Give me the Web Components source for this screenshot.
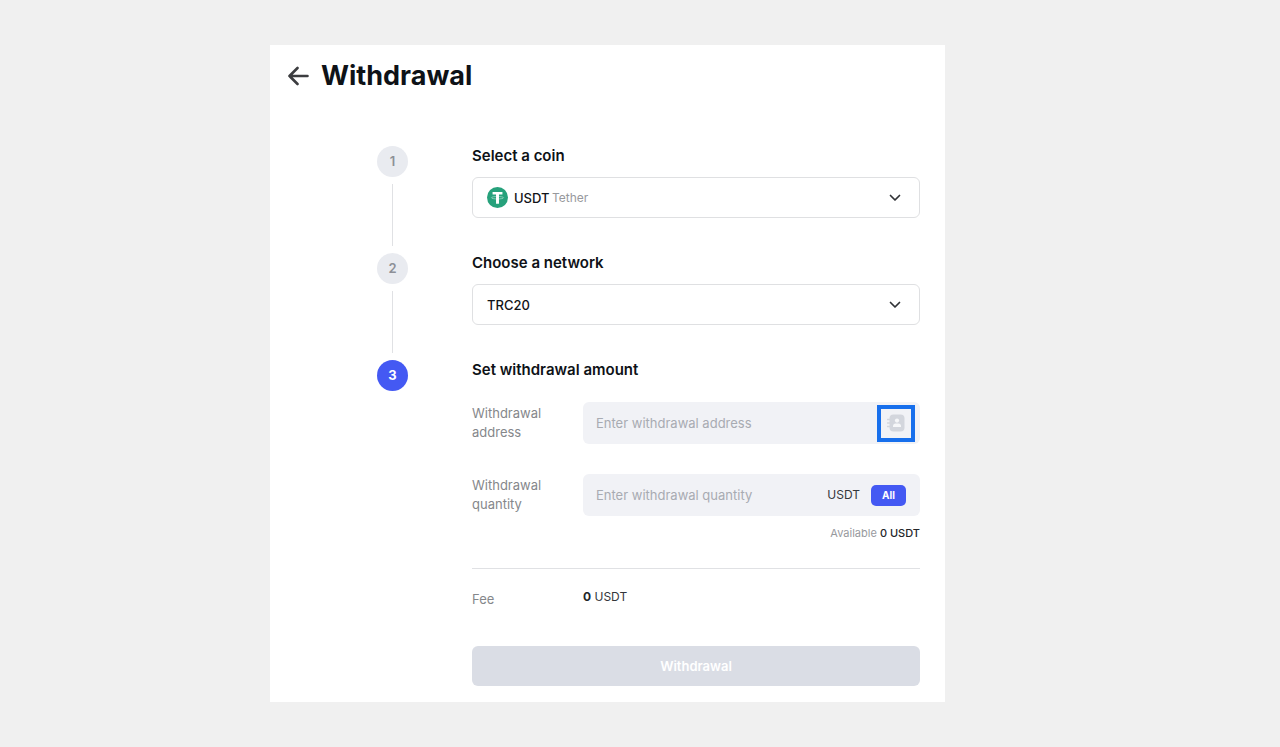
<!DOCTYPE html>
<html lang="en">
<head>
<meta charset="utf-8">
<meta name="viewport" content="width=device-width, initial-scale=1">
<title>Withdrawal</title>
<style>
  body { margin: 0; background: #f0f0f0; color: #0e1217; font: 13px/20px Inter, "Liberation Sans", sans-serif; }
</style>
</head>
<body>
<withdrawal-page>
  <withdrawal-step number="1">
    <span slot="title">Select a coin</span>
    <coin-select></coin-select>
  </withdrawal-step>
  <withdrawal-step number="2">
    <span slot="title">Choose a network</span>
    <network-select></network-select>
  </withdrawal-step>
  <withdrawal-step number="3" active>
    <span slot="title">Set withdrawal amount</span>
    <amount-form></amount-form>
  </withdrawal-step>
</withdrawal-page>

<script>
  const define = (name, html, setup) => {
    const template = document.createElement('template');
    template.innerHTML = html;
    customElements.define(name, class extends HTMLElement {
      constructor() {
        super();
        this.attachShadow({ mode: 'open' }).append(template.content.cloneNode(true));
      }
      connectedCallback() { if (setup) setup(this, this.shadowRoot); }
    });
  };

  const selectStyles = `
    :host { display: block; }
    .box { display: grid; align-items: center; }
    .box > * { grid-area: 1 / 1; }
    select { appearance: none; box-sizing: border-box; width: 100%; height: 41px; margin: 0; padding: 0 40px 0 14px;
      border: 1px solid #dfe0e2; border-radius: 6px; background: #fff; color: #121418; font: 500 13px/20px Inter, sans-serif; }
    .chevron { justify-self: end; margin-right: 18px; pointer-events: none; }
  `;
  const chevron = `<svg class="chevron" width="14" height="14" viewBox="0 0 14 14" fill="none" stroke="#303236" stroke-width="1.7" stroke-linecap="round" stroke-linejoin="round" aria-hidden="true"><path d="M2.500 4.500 7 9l4.500-4.500"/></svg>`;

  define('coin-select', `
    <style>${selectStyles}
      select { padding-left: 41px; }
      .mark { margin-left: 15px; pointer-events: none; }
      .name { margin-left: 80px; color: #97999d; font-size: 12px; pointer-events: none; }
    </style>
    <div class="box">
      <select aria-label="Coin"><option>USDT</option></select>
      <svg class="mark" width="21" height="21" viewBox="0 0 20 20" aria-hidden="true">
        <circle cx="10" cy="10" r="10" fill="#26a17b"/>
        <ellipse cx="10" cy="10.200" rx="5.800" ry="1.200" fill="none" stroke="#a5d8c7" stroke-width=".7"/>
        <path d="M5.300 4.700h9.400v2.500h-3.300v8.700H8.600V7.200H5.300z" fill="#fff"/>
      </svg>
      <span class="name">Tether</span>
      ${chevron}
    </div>`);

  define('network-select', `
    <style>${selectStyles}</style>
    <div class="box">
      <select aria-label="Network"><option>TRC20</option></select>
      ${chevron}
    </div>`);

  define('withdrawal-step', `
    <style>
      :host { display: grid; grid-template-columns: 31px minmax(0, 1fr); column-gap: 64px; }
      .rail { display: flex; flex-direction: column; align-items: center; }
      .number { width: 31px; height: 31px; border-radius: 50%; background: #e9ebf0; color: #8d9097;
        font-weight: 600; line-height: 31px; text-align: center; }
      .line { flex: 1; width: 1px; margin: 7px 0; background: #e0e1e4; }
      .content { padding-bottom: 35px; }
      h2 { margin: 0 0 11px; font-size: 15px; font-weight: 600; line-height: 20px; }
      :host([active]) .number { background: #4459f3; color: #fff; font-weight: 700; }
      :host([active]) .line { display: none; }
      :host([active]) .content { padding-bottom: 0; }
      :host([active]) h2 { margin-bottom: 22px; }
    </style>
    <div class="rail"><div class="number"></div><div class="line"></div></div>
    <section class="content"><h2><slot name="title"></slot></h2><slot></slot></section>`,
    (host, root) => { root.querySelector('.number').textContent = host.getAttribute('number'); });

  define('amount-form', `
    <style>
      :host { display: block; }
      .row { display: grid; grid-template-columns: 111px minmax(0, 1fr); align-items: center; }
      .row + .row { margin-top: 30px; }
      label, .label { color: #85878b; line-height: 19px; }
      label { width: 80px; }
      .field { display: flex; align-items: center; height: 42px; border-radius: 6px; background: #f1f2f6; }
      input { flex: 1; min-width: 0; height: 100%; box-sizing: border-box; border: 0; margin: 0; padding: 0 13px; background: none;
        color: #121418; font: 400 13px/20px Inter, sans-serif; }
      input::placeholder { color: #a8abb2; opacity: 1; }
      button { border: 0; padding: 0; margin: 0; font-family: Inter, sans-serif; }
      .book { display: grid; place-items: center; box-sizing: border-box; width: 38px; height: 37px; margin-right: 5px;
        border: 4px solid #176fec; background: none; }
      .unit { margin-right: 11px; color: #34363b; font-size: 12px; }
      .all { width: 35px; height: 21px; margin-right: 14px; border-radius: 5px; background: #4459f3; color: #fff;
        font-size: 10px; font-weight: 700; line-height: 21px; }
      .available { margin: 9px 0 27px; color: #97999d; font-size: 11px; line-height: 16px; text-align: right; }
      .available b { color: #24262a; font-weight: 500; }
      .fee { border-top: 1px solid #e0e1e4; padding-top: 20px; }
      .fee .value { padding-bottom: 4px; color: #34363b; font-size: 12px; line-height: 16px; }
      .fee b { color: #24262a; font-weight: 700; }
      .submit { display: block; width: 100%; height: 40px; margin-top: 37px; border-radius: 6px; background: #dadde5; color: #fff;
        font-size: 13px; font-weight: 600; }
    </style>
    <form>
      <div class="row">
        <label for="address">Withdrawal address</label>
        <div class="field">
          <input id="address" type="text" placeholder="Enter withdrawal address">
          <button class="book" type="button" aria-label="Address book">
            <svg width="18" height="18" viewBox="0 0 18 18" aria-hidden="true">
              <rect x="2.500" y=".5" width="15" height="17" rx="4" fill="#d3d6dd"/>
              <path d="M.5 5.500h4M.5 9h4M.5 12.500h4" stroke="#d3d6dd" stroke-width="1.300" stroke-linecap="round"/>
              <circle cx="10" cy="6.600" r="2.100" fill="#f6f7f9"/>
              <path d="M6 13v-1.200c0-1.300 1.200-2.300 2.500-2.300h3c1.300 0 2.500 1 2.500 2.300V13z" fill="#f6f7f9"/>
            </svg>
          </button>
        </div>
      </div>
      <div class="row">
        <label for="quantity">Withdrawal quantity</label>
        <div class="field">
          <input id="quantity" type="text" inputmode="decimal" placeholder="Enter withdrawal quantity">
          <span class="unit">USDT</span>
          <button class="all" type="button">All</button>
        </div>
      </div>
      <div class="available">Available <b>0 USDT</b></div>
      <div class="row fee"><span class="label">Fee</span><span class="value"><b>0</b> USDT</span></div>
      <button class="submit" type="submit" disabled>Withdrawal</button>
    </form>`);

  define('withdrawal-page', `
    <style>
      :host { display: grid; grid-template-columns: 54fr minmax(0, 135fr) 67fr; padding: 45px 0; }
      main { grid-column: 2; padding: 16px 25px 16px 18px; background: #fff; }
      header { display: flex; align-items: center; gap: 12px; margin-bottom: 55px; }
      a { display: flex; }
      h1 { margin: 0; font-size: 27px; font-weight: 700; line-height: 30px; }
      .steps { padding-left: 89px; }
    </style>
    <main>
      <header>
        <a href="#" aria-label="Back"><svg width="21" height="20" viewBox="0 0 21 20" fill="none" stroke="#3c3d40" stroke-width="2.600" stroke-linecap="round" stroke-linejoin="round" aria-hidden="true"><path d="M19.500 10h-18M9.500 2l-8 8 8 8"/></svg></a>
        <h1>Withdrawal</h1>
      </header>
      <div class="steps"><slot></slot></div>
    </main>`);
</script>
</body>
</html>
